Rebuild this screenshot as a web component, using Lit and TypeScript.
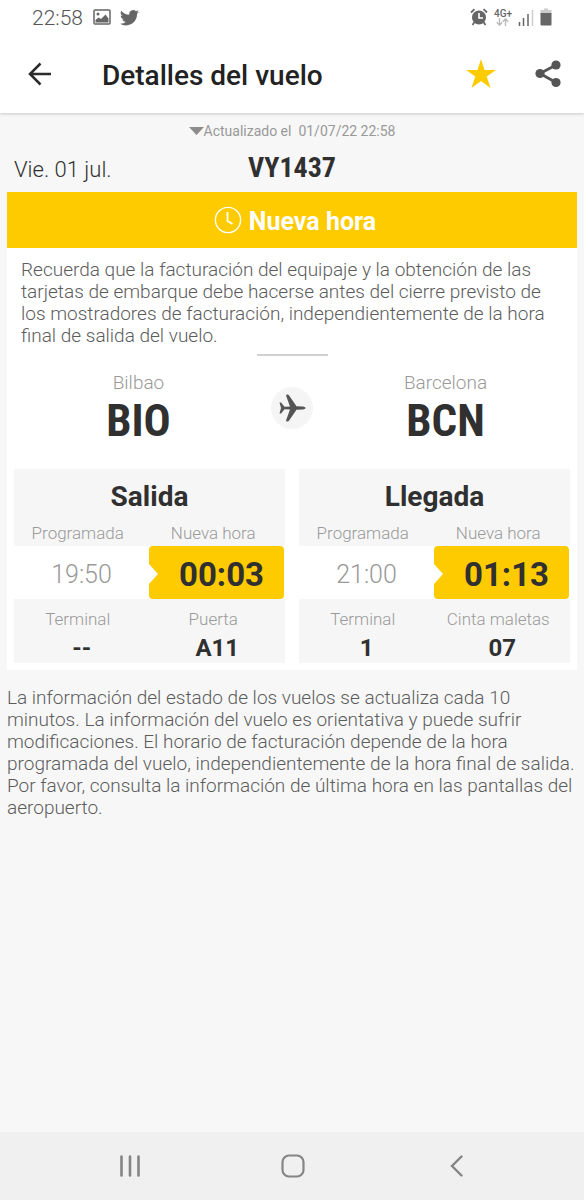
import { LitElement, html, css } from "lit";
import { customElement, property } from "lit/decorators.js";

@customElement("status-bar")
class StatusBar extends LitElement {
  static styles = css`
    :host { display: flex; align-items: center; height: 34px; padding: 0 32px; color: #666; }
    .clock { font-size: 21px; font-weight: 300; line-height: 34px; margin-right: 10px; padding-top: 2px; color: #555; }
    .left, .right { display: flex; align-items: center; }
    .left { gap: 9px; }
    .right { margin-left: auto; gap: 6px; }
    svg { display: block; }
    .net { display: flex; flex-direction: column; align-items: center; }
    .net span { font-size: 10px; line-height: 9px; font-weight: 500; }
  `;
  render() {
    return html`
      <span class="clock">22:58</span>
      <div class="left">
        <svg width="18" height="16" viewBox="0 0 18 16">
          <rect x="1" y="1" width="16" height="14" rx="1" fill="none" stroke="#666" stroke-width="1.5" />
          <circle cx="5" cy="5" r="1.5" fill="#666" />
          <path d="M2.500 13.500V11l3-2.500 2.500 1.500 4.500-4.500 3 4v4z" fill="#666" />
        </svg>
        <svg width="19" height="17" viewBox="0 1.500 24 20.500">
          <path fill="#666" d="M24 4.560a9.830 9.830 0 0 1-2.830.780 4.930 4.930 0 0 0 2.160-2.720 9.860 9.860 0 0 1-3.120 1.190 4.920 4.920 0 0 0-8.390 4.490A13.980 13.980 0 0 1 1.670 3.150a4.930 4.930 0 0 0 1.520 6.570 4.900 4.900 0 0 1-2.230-.610v.060a4.930 4.930 0 0 0 3.950 4.830 4.960 4.960 0 0 1-2.220.080 4.930 4.930 0 0 0 4.600 3.420A9.900 9.900 0 0 1 0 19.540a13.940 13.940 0 0 0 7.550 2.210c9.050 0 14-7.500 14-13.980 0-.210 0-.420-.020-.630A9.940 9.940 0 0 0 24 4.560z" />
        </svg>
      </div>
      <div class="right">
        <svg width="18" height="18" viewBox="0 0 18 18">
          <path d="M1 4.500 4.500 1.200M17 4.500 13.500 1.200M4.500 14l-2 3M13.500 14l2 3" stroke="#666" stroke-width="1.800" />
          <circle cx="9" cy="9.500" r="7" fill="#666" />
          <path d="M9 5v5h4" fill="none" stroke="#fff" stroke-width="1.600" />
        </svg>
        <div class="net">
          <span>4G+</span>
          <svg width="13" height="8" viewBox="0 0 13 8">
            <path d="M3.500 0v7M.800 4.300l2.700 2.900 2.700-2.900M9.500 8V1M6.800 3.700 9.500.800l2.700 2.900" fill="none" stroke="#bbb" stroke-width="1.400" />
          </svg>
        </div>
        <svg width="16" height="17" viewBox="0 0 16 17">
          <path d="M1.500 13v4M5.500 9v8M10 5v12" stroke="#666" stroke-width="1.500" />
          <path d="M14.500 1v16" stroke="#ccc" stroke-width="1.500" />
        </svg>
        <svg width="12" height="18" viewBox="0 0 12 18">
          <path d="M4 .500h4V2h3.500v4H.500V2H4z" fill="#ccc" />
          <path d="M.500 5h11v11.500a1 1 0 0 1-1 1h-9a1 1 0 0 1-1-1z" fill="#666" />
        </svg>
      </div>
    `;
  }
}

@customElement("flight-panel")
class FlightPanel extends LitElement {
  @property() heading = "";
  @property() planned = "";
  @property() actual = "";
  @property() terminal = "";
  @property() placeLabel = "";
  @property() place = "";
  static styles = css`
    :host { display: block; background: #f6f6f6; color: #303030; text-align: center; }
    h2 { margin: 0; padding-top: 12px; font-size: 28px; line-height: 32px; font-weight: 700; }
    .labels, .times, .values { display: grid; grid-template-columns: 1fr 1fr; }
    .labels { color: #9a9a9a; font-size: 17px; font-weight: 300; line-height: 24px; }
    .labels span { padding-right: 8px; }
    .top { padding: 8px 0 1px; }
    .bottom { padding-top: 8px; }
    .times { height: 53px; background: #fff; padding-right: 1px; }
    .planned, .actual { display: flex; align-items: center; justify-content: center; padding-top: 4px; }
    .planned { font-size: 25px; font-weight: 300; color: #999; }
    .actual { position: relative; padding-left: 10px; font-size: 33px; font-weight: 700; background: #fecb00; border-radius: 4px; }
    .notch { position: absolute; left: 0; top: 18px; display: block; }
    .values { height: 32px; font-size: 24px; line-height: 34px; font-weight: 700; }
  `;
  render() {
    return html`
      <h2>${this.heading}</h2>
      <div class="labels top"><span>Programada</span><span>Nueva hora</span></div>
      <div class="times">
        <span class="planned">${this.planned}</span>
        <span class="actual">
          <svg class="notch" width="10" height="20" viewBox="0 0 10 20"><path d="M0 0 9 10 0 20z" fill="#fff" /></svg>
          ${this.actual}
        </span>
      </div>
      <div class="labels bottom"><span>Terminal</span><span>${this.placeLabel}</span></div>
      <div class="values"><span>${this.terminal}</span><span>${this.place}</span></div>
    `;
  }
}

@customElement("app-root")
class AppRoot extends LitElement {
  static styles = css`
    :host { display: flex; flex-direction: column; min-height: 100vh; background: #f7f7f7; font-family: Roboto, "Liberation Sans", sans-serif; color: #303030; }
    button { border: 0; background: none; padding: 0; display: flex; align-items: center; justify-content: center; cursor: pointer; }
    svg { display: block; }
    .top { background: #fff; box-shadow: 0 1px 3px rgba(0, 0, 0, 0.2); }
    .bar { display: flex; align-items: center; height: 79px; padding: 0 20px 0 24px; }
    .bar h1 { margin: 0 auto 0 46px; padding-top: 4px; font-size: 28px; line-height: 36px; font-weight: 500; color: #222; }
    .bar button { width: 32px; height: 40px; }
    .bar .share { margin-left: 35px; }
    main { flex: 1; padding: 0 7px; }
    .updated { display: flex; align-items: center; justify-content: center; height: 36px; font-size: 14px; color: #999; }
    .updated span { white-space: pre; }
    .flight { display: grid; grid-template-columns: 1fr auto 1fr; align-items: baseline; height: 42px; padding: 1px 7px 0; }
    .date { font-size: 22px; font-weight: 300; line-height: 36px; }
    .number { font-family: "Roboto Condensed", Roboto, sans-serif; font-size: 28px; line-height: 36px; font-weight: 700; }
    .banner { display: flex; align-items: center; justify-content: center; gap: 7px; height: 56px; padding-left: 6px; background: #fecb00; color: #fff; font-size: 25px; font-weight: 700; }
    .banner span { padding-top: 2px; }
    .card { background: #fff; padding: 11px 7px 7px; }
    .notice { margin: 0; padding: 0 7px; font-size: 19px; line-height: 22px; font-weight: 300; color: #5c5c5c; }
    .rule { width: 71px; height: 2px; margin: 7px auto 16px; border: 0; background: #d2d2d2; }
    .route { display: grid; grid-template-columns: 1fr 58px 1fr; justify-items: center; align-items: start; height: 97px; }
    .airport { text-align: center; }
    .city { font-size: 19px; line-height: 22px; font-weight: 300; color: #999; }
    .code { font-family: "Roboto Condensed", Roboto, sans-serif; font-size: 45px; line-height: 54px; font-weight: 700; }
    .plane { width: 42px; height: 42px; margin-top: 15px; }
    .panels { display: grid; grid-template-columns: 1fr 1fr; gap: 14px; }
    .foot { margin: 17px 0 0; font-size: 19px; line-height: 22px; font-weight: 300; color: #5c5c5c; }
    .nav { display: flex; align-items: center; height: 68px; background: #f0f0f0; justify-content: space-between; padding: 0 108px 0 110px; }
    .nav button { width: 40px; height: 48px; }
  `;
  render() {
    return html`
      <div class="top">
        <status-bar></status-bar>
        <header class="bar">
          <button aria-label="Volver">
            <svg width="24" height="24" viewBox="0 0 24 24"><path d="M12.500 1.500 2 12l10.500 10.500M2 12h21" fill="none" stroke="#2b2b2b" stroke-width="2.500" /></svg>
          </button>
          <h1>Detalles del vuelo</h1>
          <button aria-label="Favorito">
            <svg width="30" height="30" viewBox="0 0 30 30"><path d="M15 0l3.500 11H30l-9.300 6.600L24.500 29 15 22 5.500 29l3.800-11.400L0 11h11.500z" fill="#fecb00" /></svg>
          </button>
          <button class="share" aria-label="Compartir">
            <svg width="26" height="28" viewBox="0 0 26 28">
              <path d="M21 5 5 13.500 21 22.500" fill="none" stroke="#555" stroke-width="2.800" />
              <circle cx="21" cy="5" r="4.600" fill="#555" /><circle cx="5" cy="13.500" r="4.600" fill="#555" /><circle cx="21" cy="22.500" r="4.600" fill="#555" />
            </svg>
          </button>
        </header>
      </div>
      <main>
        <div class="updated">
          <svg width="15" height="8" viewBox="0 0 15 8"><path d="M0 0h15L7.500 8z" fill="#8c8c8c" /></svg>
          <span>Actualizado el  01/07/22 22:58</span>
        </div>
        <div class="flight"><span class="date">Vie. 01 jul.</span><span class="number">VY1437</span></div>
        <div class="banner">
          <svg width="28" height="28" viewBox="0 0 28 28">
            <circle cx="14" cy="14" r="12.600" fill="none" stroke="#fff" stroke-width="1.400" />
            <path d="M13.500 6v9l5 3" fill="none" stroke="#fff" stroke-width="1.800" />
          </svg>
          <span>Nueva hora</span>
        </div>
        <div class="card">
          <p class="notice">Recuerda que la facturación del equipaje y la obtención de las tarjetas de embarque debe hacerse antes del cierre previsto de los mostradores de facturación, independientemente de la hora final de salida del vuelo.</p>
          <hr class="rule" />
          <div class="route">
            <div class="airport"><div class="city">Bilbao</div><div class="code">BIO</div></div>
            <svg class="plane" viewBox="0 0 42 42">
              <circle cx="21" cy="21" r="21" fill="#f5f5f5" />
              <path fill="#555" d="M8.500 15.500h1.500l3.500 4.200 5.500-.200-3.800-10.500c-.300-1 .300-1.500 1.300-1.500.700 0 1.200.400 1.600 1l7.400 10.800 6.300.200c1.500.100 2.700.700 2.700 1.500s-1.200 1.400-2.700 1.500l-6.300.200-7.400 10.800c-.400.600-.900 1-1.600 1-1 0-1.600-.500-1.300-1.500L19 22.500l-5.500-.200-3.500 4.200H8.500L10 21z" />
            </svg>
            <div class="airport"><div class="city">Barcelona</div><div class="code">BCN</div></div>
          </div>
          <div class="panels">
            <flight-panel heading="Salida" planned="19:50" actual="00:03" terminal="--" .placeLabel=${"Puerta"} place="A11"></flight-panel>
            <flight-panel heading="Llegada" planned="21:00" actual="01:13" terminal="1" .placeLabel=${"Cinta maletas"} place="07"></flight-panel>
          </div>
        </div>
        <p class="foot">La información del estado de los vuelos se actualiza cada 10 minutos. La información del vuelo es orientativa y puede sufrir modificaciones. El horario de facturación depende de la hora programada del vuelo, independientemente de la hora final de salida. Por favor, consulta la información de última hora en las pantallas del aeropuerto.</p>
      </main>
      <nav class="nav">
        <button aria-label="Recientes"><svg width="22" height="22" viewBox="0 0 22 22"><path d="M2.500 1.500v19M11 1.500v19M19.500 1.500v19" stroke="#858585" stroke-width="2.600" stroke-linecap="round" /></svg></button>
        <button aria-label="Inicio"><svg width="24" height="24" viewBox="0 0 24 24"><rect x="1.500" y="1.500" width="21" height="21" rx="6.500" fill="none" stroke="#858585" stroke-width="2.200" /></svg></button>
        <button aria-label="Atrás"><svg width="13" height="22" viewBox="0 0 13 22"><path d="M11.500 1.500 2 11l9.500 9.500" fill="none" stroke="#858585" stroke-width="2.400" stroke-linecap="round" /></svg></button>
      </nav>
    `;
  }
}
